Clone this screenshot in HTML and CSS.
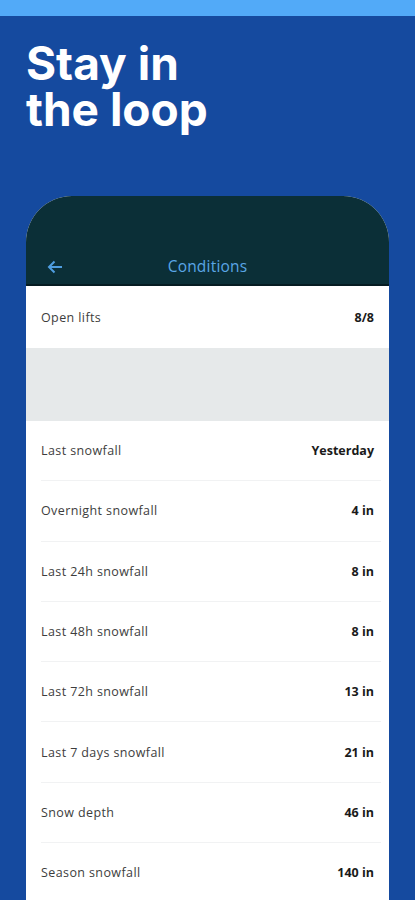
FILE: index.html
```html
<!DOCTYPE html>
<html>
<head>
<meta charset="utf-8">
<link rel="stylesheet" href="styles.css">
</head>
<body>
<div class="topbar"></div>
<div class="page">
  <h1 class="title"><span class="tline">Stay in</span><span class="tline">the loop</span></h1>
  <div class="card">
    <div class="header">
      <svg class="back" width="16" height="14" viewBox="0 0 16 14"><path d="M15 7H2.5M7.5 1.5L2 7l5.5 5.5" fill="none" stroke="#4f9ee0" stroke-width="2"/></svg>
      <span class="htitle">Conditions</span>
    </div>
    <div class="row first"><span class="label">Open lifts</span><span class="value">8/8</span></div>
    <div class="gray"></div>
    <div class="list">
      <div class="row"><span class="label">Last snowfall</span><span class="value">Yesterday</span></div>
      <div class="row"><span class="label">Overnight snowfall</span><span class="value">4 in</span></div>
      <div class="row"><span class="label">Last 24h snowfall</span><span class="value">8 in</span></div>
      <div class="row"><span class="label">Last 48h snowfall</span><span class="value">8 in</span></div>
      <div class="row"><span class="label">Last 72h snowfall</span><span class="value">13 in</span></div>
      <div class="row"><span class="label">Last 7 days snowfall</span><span class="value">21 in</span></div>
      <div class="row"><span class="label">Snow depth</span><span class="value">46 in</span></div>
      <div class="row"><span class="label">Season snowfall</span><span class="value">140 in</span></div>
    </div>
  </div>
</div>
</body>
</html>
```
FILE: styles.css
```css
html, body {
  margin: 0;
  padding: 0;
  height: 900px;
  overflow: hidden;
  background: #154a9f;
  font-family: "Open Sans", "Noto Sans", sans-serif;
}
.topbar {
  height: 16px;
  background: #52aaf8;
}
.page {
  padding: 0 26px;
}
.title {
  margin: 24px 0 0 0;
  color: #ffffff;
  font-family: Inter, "Liberation Sans", sans-serif;
  font-weight: 700;
  font-size: 46px;
  line-height: 46px;
  letter-spacing: 0;
  display: flex;
  flex-direction: column;
}
.tline {
  display: block;
  height: 46px;
}
.card {
  margin-top: 64px;
  width: 363px;
  background: #ffffff;
  border-radius: 46px 46px 0 0;
  overflow: hidden;
}
.header {
  height: 90px;
  box-sizing: border-box;
  background: #0b2f37;
  border-bottom: 2px solid #061c22;
  display: flex;
  align-items: center;
  justify-content: center;
  position: relative;
  padding-top: 52px;
}
.back {
  position: absolute;
  left: 21px;
  top: 64px;
}
.htitle {
  color: #5aa6e6;
  font-family: "Open Sans", sans-serif;
  font-size: 15.5px;
  letter-spacing: 0.2px;
}
.row {
  height: 59.3px;
  display: flex;
  align-items: center;
  justify-content: space-between;
  border-bottom: 1px solid #f1f2f3;
}
.row.first {
  height: 62px;
  padding: 0 15px;
  border-bottom: none;
}
.list .row {
  margin: 0 8px 0 15px;
  padding: 0 7px 0 0;
}
.list .row:last-child {
  border-bottom: none;
}
.gray {
  height: 73px;
  background: #e6e9ea;
}
.label {
  color: #3d3d3d;
  font-size: 12.5px;
  letter-spacing: 0.4px;
}
.value {
  color: #1a1a1a;
  font-weight: 700;
  font-size: 12.5px;
}
```
